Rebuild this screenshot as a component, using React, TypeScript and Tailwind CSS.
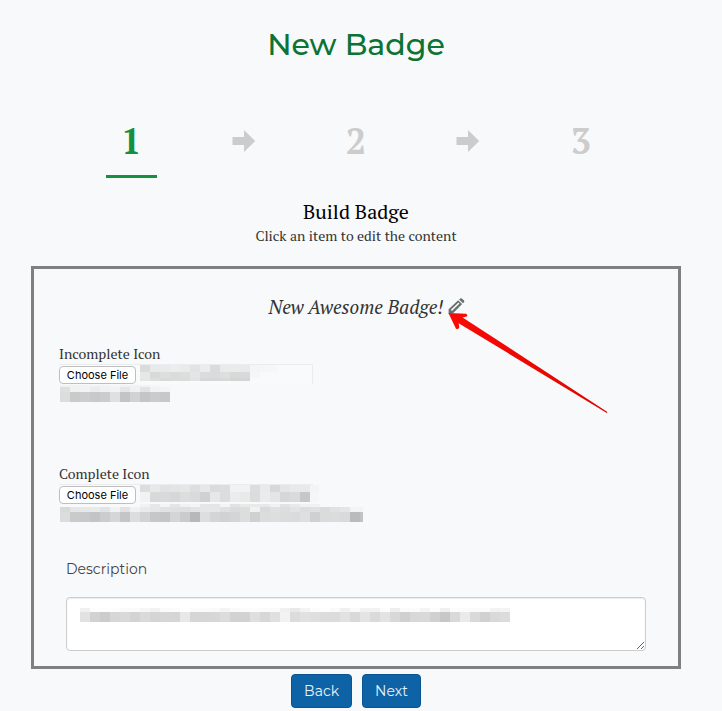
import { useId } from "react";

const sans = "font-['Montserrat','Inter',sans-serif]";
const serif = "font-['PT_Serif','Liberation_Serif',serif]";

type Band = { x: number; y: number; h: number; shades: string[] };

/* Obscured text: bands of ten-pixel wide tiles. */
function Mosaic({ bands, width, height }: { bands: Band[]; width: number; height: number }) {
  return (
    <svg aria-hidden="true" width={width} height={height} shapeRendering="crispEdges" className="block shrink-0">
      {bands.map((b, i) =>
        b.shades.map((c, j) => (
          <rect key={i + "-" + j} x={b.x + j * 10} y={b.y} width="10" height={b.h} fill={c} />
        )),
      )}
    </svg>
  );
}

const split = (s: string) => s.split(" ").map((c) => "#" + c);

const incompleteName: Band[] = [
  { x: 0, y: 1, h: 7, shades: split("dadbdb e8e9e9 e9eaeb ededee e9eaea e2e3e4 ebeced dadbdc e9eaea eaebeb e9eaea f4f5f6 f5f6f7 f6f7f8") },
  { x: 0, y: 8, h: 6, shades: split("e6e7e7 d7d8d8 dddede dadbdb dcdddd e4e5e6 dbdcdc dadbdc dddede d7d8d8 d8d9da f5f6f7") },
  { x: 0, y: 14, h: 3, shades: split("e4e5e5 dcdddd d8d9d9 dadbdb dadbdb e2e3e4 d6d7d7 d6d7d7 d8d9d9 d3d4d4 d4d5d5") },
];

const incompleteNote: Band[] = [
  { x: 0, y: 1, h: 2, shades: split("f0f1f1 f1f2f3 f2f3f4 f1f2f3 f1f2f3 f5f6f7 f1f2f3 f1f2f3 f2f3f4 f5f6f7") },
  { x: 0, y: 3, h: 5, shades: split("dedfdf f0f1f2 f2f3f4 ebeced f0f1f2 f1f2f3 e5e6e7 f0f1f2 e2e3e4 f1f2f3 f3f4f5") },
  { x: 0, y: 8, h: 10, shades: split("dbdcdc c9caca cccdcd c8c9ca cbcccd dfe1e1 c3c4c6 d1d2d4 c4c5c6 cacbcb c7c8c8") },
];

const completeName: Band[] = [
  { x: 0, y: 1, h: 7, shades: split("dcdddd e7e8e8 e1e2e2 e3e4e5 e5e6e6 dddede e6e7e8 dadbdc dcdddd f1f2f3 f1f2f3 dcdddd e9eaeb d7d8d9 e4e5e6 e8e9ea e8e9ea f3f4f5") },
  { x: 0, y: 8, h: 10, shades: split("f1f2f2 d8d9d9 d9dadb d6d7d7 dcdddd d9dada d0d1d2 e6e7e8 dcdddd ebeced e8e9e9 dbdcdc eaebec e4e6e5 d7d7d8 d9dadb c7c7c8 f5f6f7") },
];

const completeNote: Band[] = [
  { x: 80, y: 0, h: 3, shades: split("f1f2f3 e6e7e8 f3f4f5 e4e5e5 eff1f2 f3f4f5 e5e6e6 e4e5e6 f3f4f5 e1e2e3 e8e9e9 e8e9ea e7e8e8 f0f1f2 e1e2e3 e8e9ea f0f1f2 f0f1f2") },
  { x: 0, y: 3, h: 5, shades: split("d8d9d9 e5e6e7 e7e8e8 e9eaea e2e3e4 f1f2f3 e1e2e3 f0f1f1 e9eaea e5e6e6 e1e2e3 dfe0e0 dedfe0 e2e3e4 e5e6e6 e5e6e6 dfe0e0 dadbdc dcdddd f0f1f2 d9dada dfe0e0 dcdddd e2e3e3 dcddde dfe0e0 dadbdb e0e1e2 e4e5e6 f3f4f5 f3f4f5") },
  { x: 0, y: 8, h: 10, shades: split("dbdcdc c9caca c8c9c9 c3c4c5 cbcccd d5d6d6 c4c5c6 dcdddd d2d3d4 c6c7c7 c4c5c6 d4d5d5 cacbcb b7b8b9 dddfde d4d5d5 d1d2d3 d4d5d5 dcdddd cfd0d0 dbdcdc dddede dbdcdc dadbdc dedfdf cfd0d1 dadbdb dbdcdc d9dadb babbbc c1c2c4") },
];

const descriptionText: Band[] = [
  { x: 0, y: 0, h: 4, shades: split("f0f0f0 fdfdfd fdfdfd fdfdfd fafafa fafafa f6f6f6 f2f2f2 fafafa fbfbfb fefefe fbfbfb fbfbfb fafafa f3f3f3 fafafa fbfbfb fcfcfc fbfbfb fafafa f0f0f0 e9e9e9 f3f3f3 fcfcfc fdfdfd fafafa f0f0f0 fafafa f1f1f1 f2f2f2 fcfcfc eeeeee fbfbfb fbfbfb f4f4f4 fcfcfc f0f0f0 fcfcfc fbfbfb fafafa fbfbfb f2f2f2 f4f4f4") },
  { x: 0, y: 4, h: 10, shades: split("e2e2e2 d2d2d2 cccccc d7d7d7 d9d9d9 d3d3d3 dadada d5d5d5 d6d6d6 d5d5d5 e8e8e8 d6d6d6 d6d6d6 d7d7d7 dcdcdc d2d2d2 d2d2d2 dfdfdf d7d7d7 e0e0e0 f2f2f2 dcdcdc e1e1e1 dfdfdf dcdcdc dcdcdc e2e2e2 d9d9d9 e4e4e4 dadada e3e3e3 d8d8d8 d0d0d0 d8d8d8 d9d9d9 d0d0d0 c7c7c7 d9d9d9 eaeaea d9d9d9 d1d1d1 d9d9d9 dcdcdc") },
];

function StepArrow() {
  return (
    <svg aria-hidden="true" width="24" height="24" viewBox="0 0 24 24" fill="#cccccc" className="mt-[19px]">
      <path d="M.5 8H12V1L23.2 12L12 23V16H.5Z" />
    </svg>
  );
}

function Step({ n, active }: { n: number; active?: boolean }) {
  return (
    <button
      type="button"
      aria-current={active ? "step" : undefined}
      className={
        "h-[68px] w-[51px] border-b-3 pb-1 text-4xl leading-[60px] font-bold " +
        (active ? "border-[#14903f] text-[#14903f]" : "border-transparent text-[#cccccc]")
      }
    >
      {n}
    </button>
  );
}

function FileField({
  label,
  name,
  nameWidth,
  note,
  noteWidth,
  framed,
}: {
  label: string;
  name: Band[];
  nameWidth: number;
  note: Band[];
  noteWidth: number;
  framed?: boolean;
}) {
  const id = useId();
  return (
    <div className="pl-[25px]">
      <label htmlFor={id} className="block h-5 text-sm leading-5 text-[#333333]">
        {label}
      </label>
      <div
        className={
          "flex h-5 w-[254px] border-t border-[#ebecee] " + (framed ? "border-r bg-[#f9fafb]" : "")
        }
      >
        <input
          id={id}
          type="file"
          className="mt-px h-[19px] w-[77px] shrink-0 overflow-hidden font-['Inter',sans-serif] text-[11px] leading-4 text-transparent file:m-0 file:h-[18px] file:w-[77px] file:rounded-[4px] file:border file:border-solid file:border-[#bfbfbf] file:bg-white file:p-0 file:text-[11px] file:text-black"
        />
        <div className="-mt-px ml-1">
          <Mosaic bands={name} width={nameWidth} height={20} />
        </div>
      </div>
      <div className="pb-0.5 pl-px">
        <Mosaic bands={note} width={noteWidth} height={18} />
      </div>
    </div>
  );
}

function Pencil() {
  return (
    <svg aria-hidden="true" width="17" height="17" viewBox="0 0 17 17" className="block">
      <path d="M.6 11.2L10.2 2.2L14.2 6L5 15.2L.6 15.8Z" fill="#66706e" />
      <path d="M3.4 12.4L11 5" stroke="#f8f9fb" strokeWidth="1.5" />
      <path d="M10.2 1.5L15 6.2" stroke="#f8f9fb" strokeWidth="0.7" />
      <path d="M11.1 1.5L12.3.5Q13.2 0 14.1.7L16 2.5Q16.7 3.4 16 4.2L15 5.2Z" fill="#66706e" />
    </svg>
  );
}

function Pointer() {
  return (
    <svg
      aria-hidden="true"
      width="162"
      height="104"
      viewBox="0 0 162 104"
      className="pointer-events-none absolute top-[14px] left-0"
    >
      <defs>
        <linearGradient id="pointer-red" x1="0" y1="0" x2="1" y2="0">
          <stop offset="0" stopColor="#fb0a05" />
          <stop offset="1" stopColor="#dd0500" />
        </linearGradient>
      </defs>
      <path
        d="M.4 1L18.2 1.7Q20.2 3.4 18.6 4.6L14.6 5.4L159.4 100L158.8 101L10.6 11.2L11.4 15.2Q10.2 17.8 8 16.8Z"
        fill="url(#pointer-red)"
      />
    </svg>
  );
}

export default function App() {
  const descId = useId();
  const actionClass =
    "h-[34px] rounded-[4px] border border-[#0b5391] bg-[#0e63a6] px-3 text-sm leading-5 text-[#eaf2f8] " + sans;
  return (
    <main className={"min-h-screen bg-[#f8f9fb] pr-[41px] pb-[3px] pl-[31px] " + serif}>
      <h1 className={"pt-[25px] text-center text-[30px] leading-10 font-medium text-[#0b7333] " + sans}>New Badge</h1>

      <nav aria-label="Steps" className="mx-11 mt-[45px] grid grid-cols-5 justify-items-center">
        <Step n={1} active />
        <StepArrow />
        <Step n={2} />
        <StepArrow />
        <Step n={3} />
      </nav>

      <header className="mt-[22px] text-center">
        <h2 className="text-xl leading-6 text-black">Build Badge</h2>
        <p className="text-sm leading-6 text-[#333333]">Click an item to edit the content</p>
      </header>

      <section className="mt-[18px] border-3 border-[#808080] pb-[15px]">
        <div className="flex items-center justify-center gap-1 pt-[26px] pb-[25px]">
          <h3 className="text-[19px] leading-6 text-[#333333] italic">New Awesome Badge!</h3>
          <div className="relative -mt-0.5 -mr-[21px]">
            <button type="button" aria-label="Edit badge name" className="block">
              <Pencil />
            </button>
            <Pointer />
          </div>
        </div>

        <div className="grid gap-[60px]">
          <FileField
            label="Incomplete Icon"
            name={incompleteName}
            nameWidth={137}
            note={incompleteNote}
            noteWidth={110}
            framed
          />
          <FileField label="Complete Icon" name={completeName} nameWidth={179} note={completeNote} noteWidth={303} />
        </div>

        <div className="px-8">
          <label htmlFor={descId} className={"block pt-[35px] text-sm leading-5 text-[#444444] " + sans}>
            Description
          </label>
          <div className="relative mt-[18px]">
            <textarea
              id={descId}
              className="block h-[54px] w-full resize rounded-[4px] border border-[#cccccc] bg-white px-3 py-[6px] text-sm shadow-[inset_0_1px_1px_rgba(0,0,0,0.08)]"
            />
            <div className="pointer-events-none absolute top-[11px] left-[14px]">
              <Mosaic bands={descriptionText} width={430} height={14} />
            </div>
          </div>
        </div>
      </section>

      <div className="mt-[5px] flex justify-center gap-[10px]">
        <button type="button" className={actionClass}>
          Back
        </button>
        <button type="button" className={actionClass}>
          Next
        </button>
      </div>
    </main>
  );
}
